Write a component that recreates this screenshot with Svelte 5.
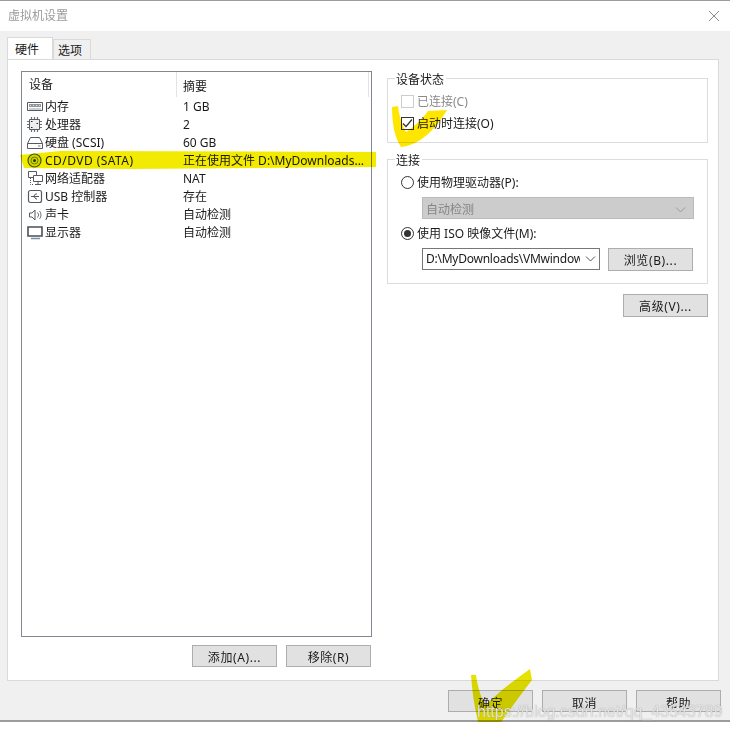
<script>
  const rows = [
    ['mem', '内存', '1 GB'],
    ['cpu', '处理器', '2'],
    ['hdd', '硬盘 (SCSI)', '60 GB'],
    ['cd', 'CD/DVD (SATA)', '正在使用文件 D:\\MyDownloads...'],
    ['net', '网络适配器', 'NAT'],
    ['usb', 'USB 控制器', '存在'],
    ['snd', '声卡', '自动检测'],
    ['mon', '显示器', '自动检测']
  ];
</script>

<div class="window">
  <header class="title">
    <span>虚拟机设置</span>
    <svg class="close" width="12" height="12" viewBox="0 0 12 12"><path d="M1 1 11 11M11 1 1 11" stroke="#8a8a8a" fill="none"/></svg>
  </header>

  <div class="body">
    <div class="tabs">
      <div class="tab active">硬件</div>
      <div class="tab">选项</div>
    </div>

    <div class="panel">
      <div class="left">
        <div class="list">
          <div class="row head">
            <div class="c1">设备</div>
            <div class="c2">摘要</div>
          </div>
          {#each rows as r}
            <div class="row item {r[0]}">
              <div class="c1">
                <svg class="ico" width="17" height="18" viewBox="0 0 17 18" fill="none" stroke="#555b61">
                  {#if r[0] === 'mem'}
                    <path d="M.5 4.500h15v8h-15z" /><path d="M2 6h12v3H2z" fill="#8f969d" stroke="none"/><path d="M3 7.500h1M6 7.500h1M9 7.500h1M12 7.500h1" stroke="#e6e6e6"/><path d="M2 11h12" stroke="#9aa0a6"/>
                  {:else if r[0] === 'cpu'}
                    <path d="M2.500 3.500h10v10h-10z" fill="#eee"/><path d="M0 5.500h2M0 8.500h2M0 11.500h2M13 5.500h2M13 8.500h2M13 11.500h2M4.500 1v2M7.500 1v2M10.500 1v2M4.500 14v2M7.500 14v2M10.500 14v2" stroke="#6b7177" stroke-width="1.200"/><path d="M4 5.500h1.500M9.500 7.500h1.500M4 11.500h1.500" stroke="#222"/>
                  {:else if r[0] === 'hdd'}
                    <path d="M3.500 3.500h9l3 6v5h-15v-5z" /><path d="M.5 9.500h15" /><path d="M11 12h2.500" stroke="#777"/>
                  {:else if r[0] === 'cd'}
                    <circle cx="7.500" cy="8.500" r="6.500" fill="#dfe6a0" stroke="#3f5f35" stroke-width="1.200"/><circle cx="7.500" cy="8.500" r="3.500" stroke="#6d8a4d"/><circle cx="7.500" cy="8.500" r="1.500" fill="#26401f" stroke="none"/>
                  {:else if r[0] === 'net'}
                    <path d="M1.500 1.500h8v6h-8z" /><path d="M6.500 5.500h9v6h-9z" fill="#fff"/><path d="M11 11.500v3M8 14.500h6" /><path d="M3.500 8v6.500h3" stroke-dasharray="1 1"/>
                  {:else if r[0] === 'usb'}
                    <rect x="1.500" y="2.500" width="13" height="12" rx="2" stroke-width="1.200"/><path d="M4 8.500h8M6.500 8.500l2-2.500h1.500M7 8.500l2 2.500h1" stroke="#4f555b"/>
                  {:else if r[0] === 'snd'}
                    <path d="M2.500 7h2.500l3-3v10l-3-3H2.500z" /><path d="M10.500 6.500a3.500 3.500 0 0 1 0 5M12.500 5a6 6 0 0 1 0 8" stroke="#6f757b"/>
                  {:else}
                    <path d="M1 3h14v9H1z" stroke-width="1.600" stroke="#4b4f54"/><path d="M4 14.500h9" stroke="#7d8ea0" stroke-width="1.500"/>
                  {/if}
                </svg>
                <span>{r[1]}</span>
              </div>
              <div class="c2">{r[2]}</div>
            </div>
          {/each}
        </div>
        <div class="actions">
          <button class="add">添加(A)...</button>
          <button class="remove">移除(R)</button>
        </div>
      </div>

      <div class="right">
        <fieldset class="status">
          <legend>设备状态</legend>
          <div class="check off"><i class="box"></i><span>已连接(C)</span></div>
          <div class="check">
            <i class="box">
              <svg width="11" height="11" viewBox="0 0 11 11"><path d="M1 5.500 4 8.500 10 1.500" fill="none" stroke="#333" stroke-width="1.200"/></svg>
            </i>
            <span>启动时连接(O)</span>
          </div>
        </fieldset>

        <fieldset class="conn">
          <legend>连接</legend>
          <div class="radio"><i class="dot"></i><span>使用物理驱动器(P):</span></div>
          <div class="select disabled">
            <span>自动检测</span>
            <svg width="11" height="6" viewBox="0 0 11 6"><path d="M1 .5 5.500 5 10 .5" fill="none" stroke="#9a9a9a"/></svg>
          </div>
          <div class="radio second"><i class="dot on"></i><span>使用 ISO 映像文件(M):</span></div>
          <div class="file">
            <div class="select">
              <span class="val">D:\MyDownloads\VMwindow</span>
              <svg width="11" height="6" viewBox="0 0 11 6"><path d="M1 .5 5.500 5 10 .5" fill="none" stroke="#555"/></svg>
            </div>
            <button class="browse">浏览(B)...</button>
          </div>
        </fieldset>

        <div class="adv"><button>高级(V)...</button></div>
      </div>
    </div>

    <footer class="foot">
      <button>确定</button>
      <button>取消</button>
      <button>帮助</button>
    </footer>
  </div>

  <svg class="marks" width="730" height="731" viewBox="0 0 730 731">
    <path d="M20 155 60 151 376 152 376 167 130 169 24 168Z" fill="#f2ea00"/>
    <path d="M392 107 C392 125 395 138 401 147 C420 145 435 130 447 110 L428 111 C420 122 412 128 406 132 C402 125 399 115 398 106Z" fill="#ffe600"/>
    <path d="M471 675 L476 675 C478 690 482 700 486 705 C500 690 515 680 530 669 L532 680 C520 695 510 710 501 722 L478 722 C474 705 472 690 471 675Z" fill="#e6e300"/>
  </svg>
  <div class="mark-text">https://blog.csdn.net/qq_43543789</div>
</div>

<style>
  :global(body) { margin: 0; background: #fff; }
  .window {
    position: relative;
    width: 730px;
    height: 731px;
    box-sizing: border-box;
    overflow: hidden;
    font: 12px/18px "Noto Sans", "Noto Sans CJK SC", sans-serif;
    color: #1a1a1a;
    background: #fff;
  }
  .title {
    height: 31px;
    box-sizing: border-box;
    border-top: 1px solid #9c9c9c;
    padding: 0 10px 0 8px;
    display: flex;
    align-items: center;
    justify-content: space-between;
    color: #9b9b9b;
  }
  .body {
    height: 691px;
    box-sizing: border-box;
    background: #f0f0f0;
    border-bottom: 2px solid #9c9c9c;
    padding: 7px 11px 0 7px;
    display: flex;
    flex-direction: column;
  }
  .tabs { display: flex; align-items: flex-end; height: 21px; position: relative; z-index: 1; }
  .tab {
    box-sizing: border-box;
    width: 38px;
    height: 20px;
    border: 1px solid #d9d9d9;
    border-bottom: 0;
    padding-left: 4px;
    line-height: 21px;
    background: #f0f0f0;
  }
  .tab.active { width: 46px; height: 22px; background: #fff; line-height: 24px; padding-left: 7px; }
  .panel {
    height: 622px;
    box-sizing: border-box;
    background: #fff;
    border: 1px solid #d9d9d9;
    padding: 11px 11px 0 13px;
    display: flex;
    gap: 15px;
  }
  .left { width: 351px; flex: none; }
  .list {
    height: 566px;
    box-sizing: border-box;
    border: 1px solid #828790;
  }
  .row { display: flex; }
  .head { height: 26px; align-items: flex-start; }
  .head .c1 { padding-left: 7px; box-sizing: border-box; border-right: 1px solid #e3e3e3; height: 25px; line-height: 30px; }
  .head .c2 { line-height: 30px; height: 25px; border-right: 1px solid #e3e3e3; flex: none; width: 192px; box-sizing: border-box; }
  .c1 { width: 155px; flex: none; display: flex; align-items: center; }
  .c2 { padding-left: 6px; }
  .item { height: 18px; }
  .item .c1 { padding-left: 5px; box-sizing: border-box; }
  .cd .c1 span { letter-spacing: .45px; }
  .ico { flex: none; margin-right: 1px; }
  .actions { display: flex; justify-content: flex-end; gap: 9px; margin-top: 8px; padding-right: 1px; }
  button {
    font: inherit;
    color: inherit;
    box-sizing: border-box;
    height: 23px;
    padding: 3px 0 0;
    background: #e1e1e1;
    border: 1px solid #adadad;
    letter-spacing: .6px;
  }
  .actions button { height: 22px; }
  .add { width: 85px; }
  .remove { width: 85px; }
  .right { width: 321px; flex: none; }
  fieldset {
    margin: 0;
    padding: 0;
    min-width: 0;
    border: 1px solid #dcdcdc;
    box-sizing: border-box;
  }
  legend { padding: 0 2px 0 1px; margin-left: -6px; line-height: 14px; transform: translateY(2px); }
  .status { height: 72px; padding: 7px 0 0 13px; }
  .conn { height: 132px; margin-top: 9px; padding: 7px 13px 0 13px; }
  .check, .radio { display: flex; align-items: center; height: 18px; }
  .check span, .radio span { padding-top: 2px; }
  .check + .check { margin-top: 4px; }
  .off { color: #8a8a8a; }
  .box {
    width: 13px;
    height: 13px;
    box-sizing: border-box;
    border: 1px solid #333;
    margin-right: 3px;
    display: flex;
    align-items: center;
    justify-content: center;
    background: #fff;
  }
  .off .box { border-color: #ccc; }
  .dot {
    width: 13px;
    height: 13px;
    box-sizing: border-box;
    border: 1px solid #333;
    border-radius: 50%;
    margin-right: 3px;
    background: #fff;
    display: flex;
    align-items: center;
    justify-content: center;
  }
  .dot.on::after {
    content: "";
    width: 7px;
    height: 7px;
    border-radius: 50%;
    background: #333;
  }
  .select {
    box-sizing: border-box;
    height: 22px;
    margin-left: 21px;
    display: flex;
    align-items: center;
    justify-content: space-between;
    padding: 0 7px 0 3px;
    border: 1px solid #777;
    background: #fff;
    white-space: nowrap;
    overflow: hidden;
  }
  .select.disabled {
    width: 272px;
    margin-top: 6px;
    background: #ccc;
    border-color: #bbb;
    color: #868686;
    padding-top: 3px;
  }
  .radio.second { margin-top: 5px; }
  .file { display: flex; gap: 8px; margin-top: 6px; }
  .file .select { width: 178px; padding-right: 3px; flex: none; }
  .val { width: 154px; overflow: hidden; letter-spacing: -.25px; }
  .browse { width: 85px; }
  .adv { display: flex; justify-content: flex-end; margin-top: 10px; }
  .adv button { width: 85px; }
  .foot {
    display: flex;
    justify-content: flex-end;
    gap: 9px;
    margin: 9px -2px 0 0;
  }
  .foot button { width: 85px; height: 22px; padding-top: 4px; }
  .marks { position: absolute; left: 0; top: 0; mix-blend-mode: multiply; pointer-events: none; }
  .mark-text {
    position: absolute;
    left: 477px;
    top: 702px;
    font: 16px/20px "Liberation Sans", sans-serif;
    color: rgba(240, 240, 240, .85);
    text-shadow: 0 0 1px rgba(110, 110, 110, .7);
    white-space: nowrap;
  }
</style>
